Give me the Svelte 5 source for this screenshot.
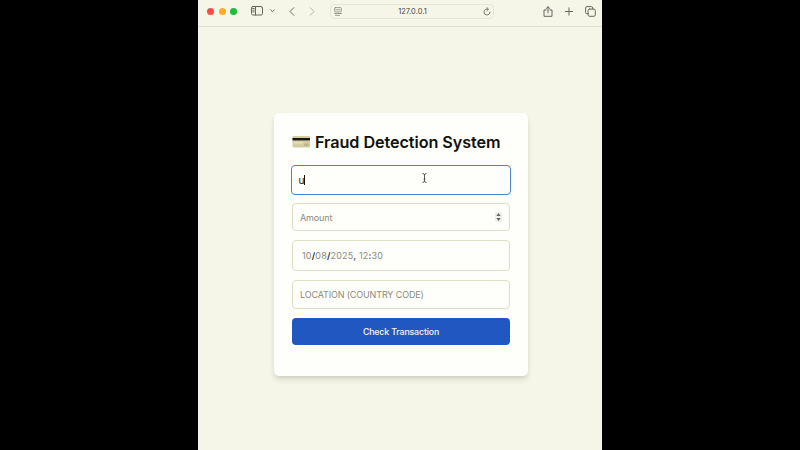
<script>
  let account = $state('u');
</script>

<div class="screen">
  <div class="window">
    <header>
      <div class="lights"><i class="red"></i><i class="amber"></i><i class="green"></i></div>
      <svg class="sidebar" width="12" height="10" viewBox="0 0 12 10"><rect x=".5" y=".5" width="11" height="8.5" rx="1.5" /><path d="M4.5 .5v8.5M1.8 2.5h1.4M1.8 4.2h1.4M1.8 5.9h1.4" /></svg>
      <svg class="chev" width="5" height="4" viewBox="0 0 5 4"><path d="M.6 .8l1.9 1.9L4.4 .8" /></svg>
      <svg class="back" width="6" height="9" viewBox="0 0 6 9"><path d="M4.8 .7L1 4.5l3.8 3.8" /></svg>
      <svg class="forward" width="6" height="9" viewBox="0 0 6 9"><path d="M1.2 .7L5 4.5 1.2 8.3" /></svg>
      <div class="address">
        <svg class="reader" width="8" height="9" viewBox="0 0 8 9"><rect x=".7" y=".6" width="6.6" height="4.4" rx=".8" /><path d="M2 2.8h4M.6 6.5h6.8M1.4 8.3h4.2" /></svg>
        <span>127.0.0.1</span>
        <svg width="8" height="9" viewBox="0 0 8 9"><path d="M4.9 2.1A3 3 0 1 0 7 5M3.8 .5l1.7 1.7L3.8 3.8" /></svg>
      </div>
      <svg class="share" width="10" height="11" viewBox="0 0 10 11"><path d="M3.2 4H1v6.3h8V4H6.8M5 7V.8M3 2.7L5 .8l2 1.9" /></svg>
      <svg class="plus" width="8" height="9" viewBox="0 0 8 9"><path d="M4 .9v7.2M.4 4.5h7.2" /></svg>
      <svg class="tabs" width="11" height="11" viewBox="0 0 11 11"><path d="M3 7.7H1.9A1.3 1.3 0 0 1 .6 6.4V1.9A1.3 1.3 0 0 1 1.9 .6h4.5a1.3 1.3 0 0 1 1.3 1.3V3" /><rect x="3.1" y="3.1" width="7.2" height="7.2" rx="1.4" /></svg>
    </header>

    <main>
      <section class="card">
        <h1>
          <svg width="18" height="12" viewBox="0 0 18 12"><rect x=".5" width="17.5" height="11.5" rx="1.3" fill="#d5cda2" /><rect x=".5" y="2" width="17.5" height="2.4" fill="#17170f" /><rect x="2" y="6" width="9" height="1.6" fill="#e6dfc0" /><rect x="12" y="7.5" width="4.5" height="2.5" fill="#bdb58c" /></svg>
          <span>Fraud Detection System</span>
        </h1>
        <div class="field focused">
          <span>{account}</span><b class="caret"></b>
          <svg class="pointer" width="5" height="10" viewBox="0 0 5 10"><path d="M.5 .6Q2.5 .6 2.5 1.8V8.2Q2.5 9.4 .5 9.4M4.5 .6Q2.5 .6 2.5 1.8M2.5 8.2Q2.5 9.4 4.5 9.4M1.6 6h1.8" /></svg>
        </div>
        <div class="field amount">
          <span>Amount</span>
          <svg width="7" height="10" viewBox="0 0 7 10"><rect width="7" height="10" rx="2" fill="#eeeeea" /><path d="M3.5 1L5.6 4H1.4zM3.5 9L5.6 6H1.4z" fill="#66665c" /></svg>
        </div>
        <div class="field date"><span>10<b>/</b>08<b>/</b>2025<b class="comma">,</b> 12<b class="comma">:</b>30</span></div>
        <div class="field location"><span>LOCATION (COUNTRY CODE)</span></div>
        <button>Check Transaction</button>
      </section>
    </main>
  </div>
</div>

<style>
  .screen {
    width: 800px;
    height: 450px;
    background: #000;
    display: flex;
    justify-content: center;
    font-family: Inter, Roboto, sans-serif;
    overflow: hidden;
  }
  .window {
    width: 404px;
    height: 450px;
    background: #f6f6e8;
    display: flex;
    flex-direction: column;
  }
  header {
    box-sizing: border-box;
    height: 27px;
    flex: none;
    display: flex;
    align-items: center;
    padding: 0 6px 4px 9px;
    border-bottom: 1px solid #dfe0d0;
  }
  svg {
    display: block;
    flex: none;
  }
  header svg {
    fill: none;
    stroke: #66665f;
    stroke-width: 1;
    stroke-linecap: round;
    stroke-linejoin: round;
  }
  .lights {
    display: flex;
    gap: 4.5px;
  }
  .lights i {
    width: 7px;
    height: 7px;
    border-radius: 50%;
  }
  .red { background: #fb4b46; }
  .amber { background: #fcab2b; }
  .green { background: #1abf38; }
  .sidebar { margin-left: 14px; }
  .chev { margin-left: 7px; }
  .back { margin-left: 14px; }
  header .forward { margin-left: 14px; stroke: #b5b5b0; }
  .address {
    box-sizing: border-box;
    width: 164px;
    height: 15px;
    margin-left: 15px;
    padding: 0 2px 0 3px;
    border: 1px solid #e6e6d4;
    border-radius: 4px;
    display: flex;
    align-items: center;
    justify-content: space-between;
    font-size: 7.4px;
    letter-spacing: .06px;
    color: #43433e;
  }
  .address svg { stroke-width: .9; }
  .address .reader { stroke-width: .7; stroke: #77776f; }
  .share { margin-left: auto; }
  .plus { margin-left: 12px; }
  .tabs { margin-left: 12px; }
  main {
    flex: 1;
    display: flex;
    justify-content: center;
    align-items: flex-start;
    padding-top: 86px;
  }
  .card {
    box-sizing: border-box;
    width: 254px;
    height: 263px;
    margin-left: 2px;
    padding: 19px 18px 0;
    background: #fefefa;
    border-radius: 5px;
    box-shadow: 0 4px 6px -1px rgba(0, 0, 0, .14), 0 2px 4px -1px rgba(0, 0, 0, .06);
  }
  h1 {
    margin: 0 0 13px;
    height: 20px;
    display: flex;
    align-items: center;
    gap: 5px;
    color: #11110f;
    font-size: 16.2px;
    font-weight: 600;
    letter-spacing: -.07px;
    white-space: nowrap;
  }
  .field {
    box-sizing: border-box;
    display: flex;
    align-items: center;
    width: 218px;
    height: 28px;
    margin-bottom: 9px;
    padding: 0 7px;
    border: 1px solid #e0dfc8;
    border-radius: 4px;
    color: #8b8b80;
    font-size: 9px;
    letter-spacing: -.14px;
    white-space: nowrap;
  }
  .focused {
    position: relative;
    width: 220px;
    height: 30px;
    margin: 0 -1px 8px;
    padding: 0 7px 1px 6.5px;
    border: 1.5px solid #4b82cf;
    color: #141412;
    font-size: 10px;
  }
  .caret {
    width: 1px;
    height: 10px;
    background: #111;
  }
  .pointer {
    position: absolute;
    left: 130px;
    top: 7px;
    fill: none;
    stroke: #33332f;
    stroke-width: .8;
  }
  .amount { justify-content: space-between; }
  .date {
    height: 31px;
    padding-left: 9px;
    letter-spacing: .17px;
  }
  .date b { color: #26261f; font-weight: 600; }
  .date .comma { color: #55554a; }
  .location { height: 29px; }
  button {
    display: block;
    width: 218px;
    height: 27px;
    padding: 0;
    border: 0;
    border-radius: 4px;
    background: #2157c0;
    color: #f4f7ff;
    font: 500 8.8px Inter, Roboto, sans-serif;
    letter-spacing: -.15px;
  }
</style>
